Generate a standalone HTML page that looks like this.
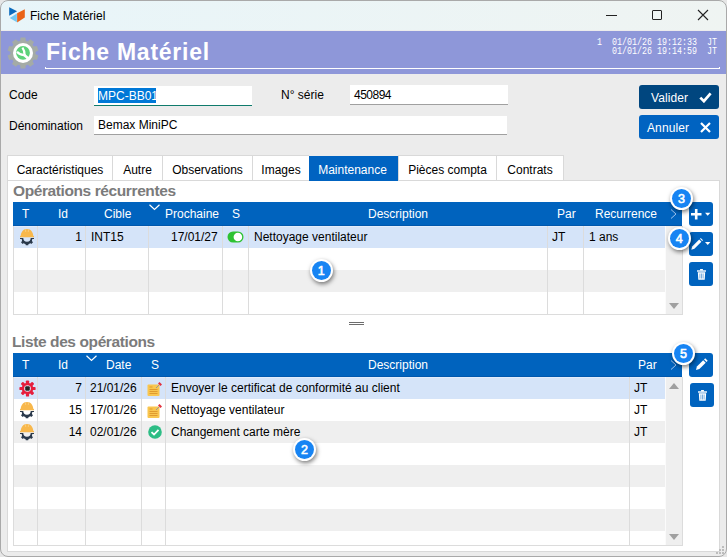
<!DOCTYPE html>
<html><head><meta charset="utf-8">
<style>
*{box-sizing:border-box;margin:0;padding:0}
html,body{width:727px;height:557px;overflow:hidden;background:#e6e6e6}
body{font-family:"Liberation Sans",sans-serif;font-size:12px;color:#000;position:relative}
.a{position:absolute}
#win{position:absolute;left:0;top:0;width:727px;height:557px;border-radius:8px;overflow:hidden;background:#ececec}
#frame{position:absolute;left:0;top:0;width:727px;height:557px;border:1px solid #a9a9a9;border-radius:8px;pointer-events:none}
#tb{position:absolute;left:0;top:0;width:727px;height:30px;background:linear-gradient(90deg,#e8f5f9,#eff4f2)}
#hdr{position:absolute;left:0;top:31px;width:727px;height:43px;background:#8e97d9}
.mono{font-family:"Liberation Mono",monospace;font-size:10.5px;color:#fff;white-space:pre;line-height:10px;transform:scaleX(0.794);transform-origin:0 0}
.lbl{font-size:12px;white-space:nowrap}
.inp{position:absolute;background:#fff;border-bottom:1px solid #a0a0a0;height:19px}
.btn{position:absolute;border-radius:3px;color:#fff}
.tab{position:absolute;top:155px;height:25px;background:#fff;border:1px solid #d9d9d9;border-bottom:none;border-right:none;text-align:center;line-height:29px}
.sec{position:absolute;font-weight:bold;color:#7b7b7b;font-size:15.5px;letter-spacing:-0.4px;white-space:nowrap}
.gh{position:absolute;background:#0063be;color:#fff;height:23px}
.gh span{position:absolute;top:5px;white-space:nowrap}
.row{position:absolute;height:22px}
.vl{position:absolute;width:1px;background:#dcdcdc}
.cell{position:absolute;white-space:nowrap}
.sbtn{position:absolute;width:24px;height:24px;background:#0063be;border-radius:3px}
.badge{position:absolute;width:23px;height:23px;border-radius:50%;background:#fff;box-shadow:1px 2px 4px rgba(0,0,0,.5)}
.badge i{position:absolute;left:2px;top:2px;width:19px;height:19px;border-radius:50%;background:#1784f3;color:#fff;font-style:normal;font-size:12.5px;text-align:center;line-height:20px;font-family:"Liberation Sans",sans-serif;-webkit-text-stroke:0.6px #fff}
</style></head><body>
<div id="win">
 <div id="tb">
  <svg class="a" style="left:0;top:0" width="30" height="30" viewBox="0 0 30 30">
   <polygon points="9.2,7.2 17.1,11.3 9.2,15.8" fill="#0a6bbd"/>
   <polygon points="9.75,18 16.9,13.5 16.9,22.2" fill="#72c8f2"/>
   <polygon points="17.1,13.3 24.8,9.3 24.8,17.6 17.1,22.6" fill="#ea6317"/>
  </svg>
  <div class="a lbl" style="left:30px;top:9px;font-size:12px">Fiche Matériel</div>
  <div class="a" style="left:606px;top:15px;width:11px;height:1px;background:#222"></div>
  <div class="a" style="left:652px;top:10px;width:10px;height:10px;border:1px solid #222;border-radius:1px"></div>
  <svg class="a" style="left:697px;top:9px" width="12" height="12" viewBox="0 0 12 12"><path d="M1 1L11 11M11 1L1 11" stroke="#222" stroke-width="1.1"/></svg>
 </div>
 <div id="hdr">
  <svg class="a" style="left:7px;top:6px" width="32" height="32" viewBox="0 0 32 32">
   <g fill="#a4aba6">
    <circle cx="16" cy="16" r="12.6"/>
    <path d="M13.6 0.6H18.4L19 5H13Z" transform="rotate(0 16 16)"/><path d="M13.6 0.6H18.4L19 5H13Z" transform="rotate(36 16 16)"/><path d="M13.6 0.6H18.4L19 5H13Z" transform="rotate(72 16 16)"/><path d="M13.6 0.6H18.4L19 5H13Z" transform="rotate(108 16 16)"/><path d="M13.6 0.6H18.4L19 5H13Z" transform="rotate(144 16 16)"/><path d="M13.6 0.6H18.4L19 5H13Z" transform="rotate(180 16 16)"/><path d="M13.6 0.6H18.4L19 5H13Z" transform="rotate(216 16 16)"/><path d="M13.6 0.6H18.4L19 5H13Z" transform="rotate(252 16 16)"/><path d="M13.6 0.6H18.4L19 5H13Z" transform="rotate(288 16 16)"/><path d="M13.6 0.6H18.4L19 5H13Z" transform="rotate(324 16 16)"/>
   </g>
   <circle cx="16" cy="16" r="10" fill="#fff"/>
   <circle cx="16" cy="15.8" r="6.9" fill="#5dd27a"/>
   <path d="M10 14.8 Q13 18.2 17.4 18.2" fill="none" stroke="#fff" stroke-width="2.2"/>
   <path d="M15.4 10.6 Q17.6 13.5 17.6 18" fill="none" stroke="#fff" stroke-width="2.2"/>
   <path d="M17 17.8 L21.5 21.8" fill="none" stroke="#fff" stroke-width="2.8"/>
   </svg>
  <div id="bigt" class="a" style="left:46px;top:8px;font-size:23px;font-weight:bold;color:#fff;white-space:nowrap;letter-spacing:0.75px">Fiche Matériel</div>
  <div class="a" style="left:45px;top:37px;width:675px;height:1px;background:#fff"></div><div class="a" style="left:45px;top:36px;width:1px;height:1px;background:#fff"></div><div class="a" style="left:719px;top:36px;width:1px;height:1px;background:#fff"></div>
  <div class="a mono" style="left:597px;top:6px">1  01/01/26 19:12:33  JT</div>
  <div class="a mono" style="left:612px;top:15px">01/01/26 19:14:59  JT</div>
 </div>

 <!-- form -->
 <div class="a lbl" style="left:9px;top:88px">Code</div>
 <div class="inp" style="left:94px;top:86px;width:158px;height:20px;border-bottom:1px solid #0f7b6c"></div>
 <div class="a" style="left:98px;top:88px;width:58px;height:15px;background:#0078d7"></div>
 <div class="a lbl" style="left:98px;top:89px;color:#fff">MPC-BB01</div>
 <div class="a lbl" style="left:281px;top:88px">N° série</div>
 <div class="inp" style="left:350px;top:85px;width:158px;height:20px"></div>
 <div class="a lbl" style="left:354px;top:88px;letter-spacing:-0.5px">450894</div>
 <div class="a lbl" style="left:9px;top:119px">Dénomination</div>
 <div class="inp" style="left:94px;top:116px;width:413px"></div>
 <div class="a lbl" style="left:98px;top:118px">Bemax MiniPC</div>

 <div class="btn" style="left:639px;top:85px;width:80px;height:24px;background:#00467f">
  <div class="a lbl" style="left:12px;top:6px;font-size:12px;letter-spacing:0.1px">Valider</div>
  <svg class="a" style="left:60px;top:7px" width="13" height="11" viewBox="0 0 13 11"><path d="M1.3 5.6L4.9 9.2L11.6 1.4" fill="none" stroke="#fff" stroke-width="2.7"/></svg>
 </div>
 <div class="btn" style="left:639px;top:115px;width:80px;height:24px;background:#0063c1">
  <div class="a lbl" style="left:8px;top:6px;font-size:12px;letter-spacing:0.1px">Annuler</div>
  <svg class="a" style="left:61px;top:7px" width="11" height="11" viewBox="0 0 11 11"><path d="M1 1L10 10M10 1L1 10" fill="none" stroke="#fff" stroke-width="2.2"/></svg>
 </div>

 <!-- tabs -->
 <div class="a" style="left:7px;top:180px;width:713px;height:372px;background:#fff;border:1px solid #d9d9d9"></div>
 <div class="tab" style="left:7px;width:105px">Caractéristiques</div>
 <div class="tab" style="left:112px;width:50px">Autre</div>
 <div class="tab" style="left:162px;width:90px">Observations</div>
 <div class="tab" style="left:252px;width:57px">Images</div>
 <div class="tab" style="left:309px;top:156px;width:89px;height:25px;line-height:27px;padding-top:1px;background:#0063c1;color:#fff;border:none;text-indent:-2px">Maintenance</div>
 <div class="tab" style="left:398px;width:98px">Pièces compta</div>
 <div class="tab" style="left:496px;width:68px;border-right:1px solid #d9d9d9">Contrats</div>

 <div class="sec" style="left:13px;top:182px">Opérations récurrentes</div>
<!--G1-->
<div class="gh" style="left:13px;top:202px;width:669px;height:24px;border-bottom:1px solid #0057ad"></div>
<div class="cell" style="left:22px;top:207px;color:#fff;">T</div>
<div class="cell" style="left:58px;top:207px;color:#fff;">Id</div>
<div class="cell" style="left:104px;top:207px;color:#fff;">Cible</div>
<div class="cell" style="left:165px;top:207px;color:#fff;">Prochaine</div>
<div class="cell" style="left:232px;top:207px;color:#fff;">S</div>
<div class="cell" style="left:368px;top:207px;color:#fff;">Description</div>
<div class="cell" style="left:557px;top:207px;color:#fff;">Par</div>
<div class="cell" style="left:595px;top:207px;color:#fff;">Recurrence</div>
<div class="row" style="left:13px;top:226px;width:652px;height:22px;background:#d5e4f9;border-top:1px solid #e3ecfb"></div>
<div class="row" style="left:13px;top:248px;width:652px;height:22px;background:#ffffff"></div>
<div class="row" style="left:13px;top:270px;width:652px;height:22px;background:#efefef"></div>
<div class="row" style="left:13px;top:292px;width:652px;height:22px;background:#ffffff"></div>
<div class="vl" style="left:37px;top:226px;height:88px"></div>
<div class="vl" style="left:85px;top:226px;height:88px"></div>
<div class="vl" style="left:148px;top:226px;height:88px"></div>
<div class="vl" style="left:222px;top:226px;height:88px"></div>
<div class="vl" style="left:248px;top:226px;height:88px"></div>
<div class="vl" style="left:547px;top:226px;height:88px"></div>
<div class="vl" style="left:583px;top:226px;height:88px"></div>
<div class="vl" style="left:13px;top:226px;height:89px;background:#dcdcdc"></div>
<div class="a" style="left:13px;top:314px;width:670px;height:1px;background:#dcdcdc"></div>
<div class="a" style="left:665px;top:226px;width:18px;height:88px;background:#efefef;border-left:1px solid #fbfbfb;border-right:1px solid #dcdcdc"></div>
<div class="cell" style="left:71px;top:230px;width:11px;text-align:right">1</div>
<div class="cell" style="left:91px;top:230px;">INT15</div>
<div class="cell" style="left:171px;top:230px;">17/01/27</div>
<div class="cell" style="left:254px;top:230px;">Nettoyage ventilateur</div>
<div class="cell" style="left:552px;top:230px;">JT</div>
<div class="cell" style="left:589px;top:230px;">1 ans</div>
<!--G2-->
<div class="gh" style="left:13px;top:353px;width:669px;height:24px;border-bottom:1px solid #0057ad"></div>
<div class="cell" style="left:22px;top:358px;color:#fff;">T</div>
<div class="cell" style="left:58px;top:358px;color:#fff;">Id</div>
<div class="cell" style="left:106px;top:358px;color:#fff;">Date</div>
<div class="cell" style="left:151px;top:358px;color:#fff;">S</div>
<div class="cell" style="left:368px;top:358px;color:#fff;">Description</div>
<div class="cell" style="left:638px;top:358px;color:#fff;">Par</div>
<div class="row" style="left:13px;top:377px;width:652px;height:22px;background:#d5e4f9;border-top:1px solid #e3ecfb"></div>
<div class="row" style="left:13px;top:399px;width:652px;height:22px;background:#ffffff"></div>
<div class="row" style="left:13px;top:421px;width:652px;height:22px;background:#efefef"></div>
<div class="row" style="left:13px;top:443px;width:652px;height:22px;background:#ffffff"></div>
<div class="row" style="left:13px;top:465px;width:652px;height:22px;background:#efefef"></div>
<div class="row" style="left:13px;top:487px;width:652px;height:22px;background:#ffffff"></div>
<div class="row" style="left:13px;top:509px;width:652px;height:22px;background:#efefef"></div>
<div class="row" style="left:13px;top:531px;width:652px;height:14px;background:#ffffff"></div>
<div class="vl" style="left:37px;top:377px;height:168px"></div>
<div class="vl" style="left:85px;top:377px;height:168px"></div>
<div class="vl" style="left:141px;top:377px;height:168px"></div>
<div class="vl" style="left:165px;top:377px;height:168px"></div>
<div class="vl" style="left:629px;top:377px;height:168px"></div>
<div class="vl" style="left:13px;top:377px;height:169px;background:#dcdcdc"></div>
<div class="a" style="left:13px;top:545px;width:670px;height:1px;background:#dcdcdc"></div>
<div class="a" style="left:665px;top:377px;width:18px;height:168px;background:#efefef;border-left:1px solid #fbfbfb;border-right:1px solid #dcdcdc"></div>
<div class="cell" style="left:61px;top:381px;width:21px;text-align:right">7</div>
<div class="cell" style="left:90px;top:381px;">21/01/26</div>
<div class="cell" style="left:171px;top:381px;">Envoyer le certificat de conformité au client</div>
<div class="cell" style="left:634px;top:381px;">JT</div>
<div class="cell" style="left:61px;top:403px;width:21px;text-align:right">15</div>
<div class="cell" style="left:90px;top:403px;">17/01/26</div>
<div class="cell" style="left:171px;top:403px;">Nettoyage ventilateur</div>
<div class="cell" style="left:634px;top:403px;">JT</div>
<div class="cell" style="left:61px;top:425px;width:21px;text-align:right">14</div>
<div class="cell" style="left:90px;top:425px;">02/01/26</div>
<div class="cell" style="left:171px;top:425px;">Changement carte mère</div>
<div class="cell" style="left:634px;top:425px;">JT</div>
<div class="sec" style="left:12px;top:333px">Liste des opérations</div>
<div class="a" style="left:349px;top:322px;width:15px;height:1px;background:#6d6d6d"></div>
<div class="a" style="left:349px;top:324px;width:15px;height:1px;background:#6d6d6d"></div>
<svg class="a" style="left:670px;top:209px" width="7" height="10" viewBox="0 0 7 10"><path d="M1 0.5L6 5L1 9.5" fill="none" stroke="#9fc3ee" stroke-width="1"/></svg>
<svg class="a" style="left:670px;top:360px" width="7" height="10" viewBox="0 0 7 10"><path d="M1 0.5L6 5L1 9.5" fill="none" stroke="#9fc3ee" stroke-width="1"/></svg>
<svg class="a" style="left:148.5px;top:203.8px" width="11" height="7" viewBox="0 0 11 7"><path d="M0.5 0.8L5.5 5.5L10.5 0.8" fill="none" stroke="#fff" stroke-width="1.2"/></svg>
<svg class="a" style="left:85.5px;top:354.8px" width="11" height="7" viewBox="0 0 11 7"><path d="M0.5 0.8L5.5 5.5L10.5 0.8" fill="none" stroke="#fff" stroke-width="1.2"/></svg>
<div class="a" style="left:669px;top:303px;width:0;height:0;border-left:5px solid transparent;border-right:5px solid transparent;border-top:6px solid #a0a0a0"></div>
<div class="a" style="left:669px;top:383px;width:0;height:0;border-left:5px solid transparent;border-right:5px solid transparent;border-bottom:6px solid #a0a0a0"></div>
<div class="a" style="left:669px;top:534px;width:0;height:0;border-left:5px solid transparent;border-right:5px solid transparent;border-top:6px solid #a0a0a0"></div>
<div class="sbtn" style="left:689px;top:202px"><svg class="a" style="left:2px;top:7px" width="21" height="11" viewBox="0 0 21 11"><path d="M5.2 0V10.5M0 5.2H10.5" stroke="#fff" stroke-width="2.6"/><path d="M14 3.8H19.4L16.7 6.8Z" fill="#fff"/></svg></div>
<div class="sbtn" style="left:689px;top:232px"><svg class="a" style="left:2px;top:6px" width="21" height="12" viewBox="0 0 21 12"><path d="M0.3 11.7L1.2 8.6L8.2 1.6L10.4 3.8L3.4 10.8Z" fill="#fff"/><path d="M9 0.8L9.8 0L12 2.2L11.2 3Z" fill="#fff"/><path d="M14 4H19.4L16.7 7Z" fill="#fff"/></svg></div>
<div class="sbtn" style="left:689px;top:262px"><svg class="a" style="left:8px;top:7px" width="9" height="11" viewBox="0 0 9 11"><rect x="0" y="1.3" width="9" height="1.4" fill="#fff"/><rect x="3" y="0" width="3" height="1.5" rx="0.5" fill="#fff"/><path d="M0.8 3.2H8.2L7.7 10.8H1.3Z" fill="#fff"/><path d="M2.9 4.5V9.5M4.5 4.5V9.5M6.1 4.5V9.5" stroke="#5c9ad6" stroke-width="0.8"/></svg></div>
<div class="sbtn" style="left:689px;top:353px"><svg class="a" style="left:6px;top:5px" width="13" height="13" viewBox="0 0 13 13"><path d="M1 12L1.9 8.6L8.2 2.3L10.7 4.8L4.4 11.1Z" fill="#fff"/><path d="M9 1.5L10.2 0.3L12.7 2.8L11.5 4Z" fill="#fff"/></svg></div>
<div class="sbtn" style="left:690px;top:383px"><svg class="a" style="left:8px;top:7px" width="9" height="11" viewBox="0 0 9 11"><rect x="0" y="1.3" width="9" height="1.4" fill="#fff"/><rect x="3" y="0" width="3" height="1.5" rx="0.5" fill="#fff"/><path d="M0.8 3.2H8.2L7.7 10.8H1.3Z" fill="#fff"/><path d="M2.9 4.5V9.5M4.5 4.5V9.5M6.1 4.5V9.5" stroke="#5c9ad6" stroke-width="0.8"/></svg></div>
<div class="badge" style="left:309.8px;top:258.7px"><i>1</i></div>
<div class="badge" style="left:292.9px;top:437.8px"><i>2</i></div>
<div class="badge" style="left:669.9px;top:187.4px"><i>3</i></div>
<div class="badge" style="left:667.7px;top:226.9px"><i>4</i></div>
<div class="badge" style="left:671.9px;top:341.7px"><i>5</i></div>
<div class="a" style="left:19px;top:228px"><svg width="16" height="18" viewBox="0 0 16 18"><path d="M1.6 8 C2 5 3.4 2.4 5.2 1.5 C6.6 0.8 9.4 0.8 10.8 1.5 C12.6 2.4 14 5 14.4 8 L15 8 L15 9.2 L1 9.2 L1 8 Z" fill="#f8b84c"/><path d="M6.4 1.6 L6.7 4 M9.6 1.6 L9.3 4" stroke="#fbd28a" stroke-width="0.7"/><g fill="#2b3a4c"><path d="M1 10 H15 V11.1 H13.3 A5.3 5.3 0 0 1 2.7 11.1 H1 Z M4.3 10 A3.7 3.7 0 0 0 11.7 10 Z" fill-rule="evenodd"/><rect x="6.7" y="14.5" width="2.6" height="2.8" rx="0.4"/><rect x="6.7" y="14.5" width="2.6" height="2.8" rx="0.4" transform="rotate(45 8 10)"/><rect x="6.7" y="14.5" width="2.6" height="2.8" rx="0.4" transform="rotate(-45 8 10)"/></g></svg></div>
<div class="a" style="left:19px;top:401px"><svg width="16" height="18" viewBox="0 0 16 18"><path d="M1.6 8 C2 5 3.4 2.4 5.2 1.5 C6.6 0.8 9.4 0.8 10.8 1.5 C12.6 2.4 14 5 14.4 8 L15 8 L15 9.2 L1 9.2 L1 8 Z" fill="#f8b84c"/><path d="M6.4 1.6 L6.7 4 M9.6 1.6 L9.3 4" stroke="#fbd28a" stroke-width="0.7"/><g fill="#2b3a4c"><path d="M1 10 H15 V11.1 H13.3 A5.3 5.3 0 0 1 2.7 11.1 H1 Z M4.3 10 A3.7 3.7 0 0 0 11.7 10 Z" fill-rule="evenodd"/><rect x="6.7" y="14.5" width="2.6" height="2.8" rx="0.4"/><rect x="6.7" y="14.5" width="2.6" height="2.8" rx="0.4" transform="rotate(45 8 10)"/><rect x="6.7" y="14.5" width="2.6" height="2.8" rx="0.4" transform="rotate(-45 8 10)"/></g></svg></div>
<div class="a" style="left:19px;top:423px"><svg width="16" height="18" viewBox="0 0 16 18"><path d="M1.6 8 C2 5 3.4 2.4 5.2 1.5 C6.6 0.8 9.4 0.8 10.8 1.5 C12.6 2.4 14 5 14.4 8 L15 8 L15 9.2 L1 9.2 L1 8 Z" fill="#f8b84c"/><path d="M6.4 1.6 L6.7 4 M9.6 1.6 L9.3 4" stroke="#fbd28a" stroke-width="0.7"/><g fill="#2b3a4c"><path d="M1 10 H15 V11.1 H13.3 A5.3 5.3 0 0 1 2.7 11.1 H1 Z M4.3 10 A3.7 3.7 0 0 0 11.7 10 Z" fill-rule="evenodd"/><rect x="6.7" y="14.5" width="2.6" height="2.8" rx="0.4"/><rect x="6.7" y="14.5" width="2.6" height="2.8" rx="0.4" transform="rotate(45 8 10)"/><rect x="6.7" y="14.5" width="2.6" height="2.8" rx="0.4" transform="rotate(-45 8 10)"/></g></svg></div>
<div class="a" style="left:18.5px;top:379.5px"><svg width="17" height="17" viewBox="0 0 17 17"><g fill="#e61e3c"><circle cx="8.5" cy="8.5" r="5.7"/><rect x="6.9" y="0.4" width="3.2" height="4.5" rx="0.9" transform="rotate(0 8.5 8.5)"/><rect x="6.9" y="0.4" width="3.2" height="4.5" rx="0.9" transform="rotate(45 8.5 8.5)"/><rect x="6.9" y="0.4" width="3.2" height="4.5" rx="0.9" transform="rotate(90 8.5 8.5)"/><rect x="6.9" y="0.4" width="3.2" height="4.5" rx="0.9" transform="rotate(135 8.5 8.5)"/><rect x="6.9" y="0.4" width="3.2" height="4.5" rx="0.9" transform="rotate(180 8.5 8.5)"/><rect x="6.9" y="0.4" width="3.2" height="4.5" rx="0.9" transform="rotate(225 8.5 8.5)"/><rect x="6.9" y="0.4" width="3.2" height="4.5" rx="0.9" transform="rotate(270 8.5 8.5)"/><rect x="6.9" y="0.4" width="3.2" height="4.5" rx="0.9" transform="rotate(315 8.5 8.5)"/></g><circle cx="8.5" cy="8.5" r="3.3" fill="#e9f1fc"/><rect x="6.2" y="6.2" width="4.6" height="4.6" rx="1" fill="#252525"/></svg></div>
<div class="a" style="left:227px;top:231px"><svg width="17" height="12" viewBox="0 0 17 12"><rect x="0.5" y="0.5" width="16" height="11" rx="5.5" fill="#2ec233"/><circle cx="10.9" cy="6" r="4.3" fill="#fff"/></svg></div>
<div class="a" style="left:147px;top:381px"><svg width="16" height="16" viewBox="0 0 16 16"><rect x="0.5" y="3.5" width="12" height="11.5" rx="1" fill="#f9c64f"/><path d="M2.5 6H5.5M2.5 8.5H10.5M2.5 10.5H10.5M2.5 12.5H10.5" stroke="#e09b2d" stroke-width="1"/><path d="M9 7L12 4" stroke="#999" stroke-width="1"/><path d="M11 2.5L13.5 5L15 3.5L12.5 1Z" fill="#e2323f"/></svg></div>
<div class="a" style="left:147px;top:403px"><svg width="16" height="16" viewBox="0 0 16 16"><rect x="0.5" y="3.5" width="12" height="11.5" rx="1" fill="#f9c64f"/><path d="M2.5 6H5.5M2.5 8.5H10.5M2.5 10.5H10.5M2.5 12.5H10.5" stroke="#e09b2d" stroke-width="1"/><path d="M9 7L12 4" stroke="#999" stroke-width="1"/><path d="M11 2.5L13.5 5L15 3.5L12.5 1Z" fill="#e2323f"/></svg></div>
<div class="a" style="left:148px;top:425px"><svg width="14" height="14" viewBox="0 0 14 14"><circle cx="7" cy="7" r="6.8" fill="#2dbd85"/><path d="M3.5 7.2L6 9.5L10.5 4.8" fill="none" stroke="#fff" stroke-width="1.8"/></svg></div>
<div class="a" style="left:722px;top:546px;width:2px;height:2px;background:#bdbdbd"></div>
<div class="a" style="left:719px;top:549px;width:2px;height:2px;background:#bdbdbd"></div>
<div class="a" style="left:722px;top:549px;width:2px;height:2px;background:#bdbdbd"></div>
<div class="a" style="left:716px;top:552px;width:2px;height:2px;background:#bdbdbd"></div>
<div class="a" style="left:719px;top:552px;width:2px;height:2px;background:#bdbdbd"></div>
<div class="a" style="left:722px;top:552px;width:2px;height:2px;background:#bdbdbd"></div>
<!--/G-->
</div>
<div id="frame"></div>
</body></html>
